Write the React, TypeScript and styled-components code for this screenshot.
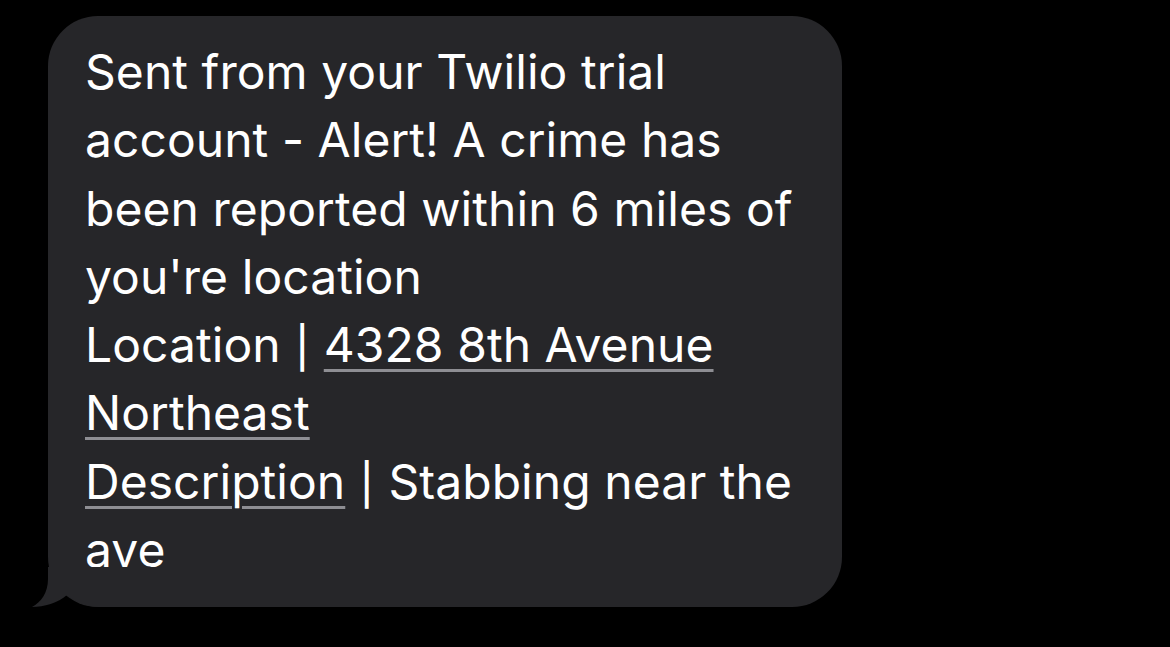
import React from "react";
import styled, { createGlobalStyle } from "styled-components";

const Global = createGlobalStyle`
  html, body { margin: 0; padding: 0; background: #000; }
  body { width: 1170px; height: 647px; overflow: hidden; }
`;

const Screen = styled.div`
  width: 1170px;
  height: 647px;
  background: #000;
  padding: 16px 0 0 48px;
  box-sizing: border-box;
`;

const Bubble = styled.div`
  position: relative;
  width: 794px;
  height: 591px;
  box-sizing: border-box;
  background: #262629;
  border-radius: 50px;
  padding: 22px 10px 0 37px;
`;

const Text = styled.div`
  font-family: Inter, "Noto Sans", sans-serif;
  font-size: 48px;
  line-height: 68.3px;
  color: #fff;
  letter-spacing: 0.05px;
  white-space: nowrap;
`;

const Pipe = styled.span`
  display: inline-block;
  transform: scaleY(0.85) translateY(3px);
`;

const Link = styled.span`
  text-decoration: underline;
  text-decoration-color: #8e8e93;
  text-decoration-thickness: 3px;
  text-underline-offset: 7px;
`;

const Tail = styled.svg`
  position: absolute;
  left: -16px;
  bottom: 0;
  width: 68px;
  height: 40px;
`;

export default function App() {
  return (
    <>
      <Global />
      <Screen>
        <Bubble>
          <Text>
            Sent from your Twilio trial
            <br />
            account - Alert! A crime has
            <br />
            been reported within 6 miles of
            <br />
            you're location
            <br />
            Location <Pipe>|</Pipe> <Link>4328 8th Avenue</Link>
            <br />
            <Link>Northeast</Link>
            <br />
            <Link>Description</Link> <Pipe>|</Pipe> Stabbing near the
            <br />
            ave
          </Text>
          <Tail viewBox="0 0 68 40">
            <path
              d="M16 0 L16 12 C16 26 9 35 0 40 C12 40 26 36 35 28 C44 36 56 40 68 40 L68 0 Z"
              fill="#262629"
            />
          </Tail>
        </Bubble>
      </Screen>
    </>
  );
}
